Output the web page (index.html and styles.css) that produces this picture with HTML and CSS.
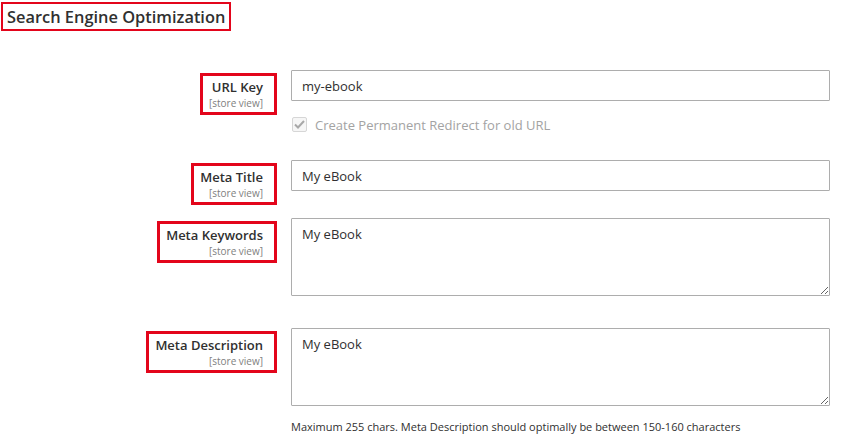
FILE: index.html
```html
<html>
    <head>
        <title>Search Engine Optimization</title>
        <meta charset="utf-8">
        <link rel="stylesheet" href="styles.css">
    </head>
    <body>
        <div class="section">
            <h2 class="section-title mark">Search Engine Optimization</h2>

            <div class="field-row row-url">
                <div class="label-col">
                    <label class="field-label mark" for="url-key">
                        <span class="label-text">URL Key</span>
                        <span class="scope">[store view]</span>
                    </label>
                </div>
                <div class="control">
                    <input id="url-key" class="text-input" type="text" value="my-ebook">
                    <div class="check-line">
                        <span class="check-box">
                            <svg width="11" height="9" viewBox="0 0 11 9"><path d="M1 4.5 L4 7.5 L10 1" fill="none" stroke="#a8a8a8" stroke-width="2"/></svg>
                        </span>
                        <span class="check-text">Create Permanent Redirect for old URL</span>
                    </div>
                </div>
            </div>

            <div class="field-row row-title">
                <div class="label-col">
                    <label class="field-label mark" for="meta-title">
                        <span class="label-text">Meta Title</span>
                        <span class="scope">[store view]</span>
                    </label>
                </div>
                <div class="control">
                    <input id="meta-title" class="text-input" type="text" value="My eBook">
                </div>
            </div>

            <div class="field-row row-keywords">
                <div class="label-col">
                    <label class="field-label mark" for="meta-keywords">
                        <span class="label-text">Meta Keywords</span>
                        <span class="scope">[store view]</span>
                    </label>
                </div>
                <div class="control">
                    <textarea id="meta-keywords" class="text-area">My eBook</textarea>
                </div>
            </div>

            <div class="field-row row-description">
                <div class="label-col">
                    <label class="field-label mark" for="meta-description">
                        <span class="label-text">Meta Description</span>
                        <span class="scope">[store view]</span>
                    </label>
                </div>
                <div class="control">
                    <textarea id="meta-description" class="text-area">My eBook</textarea>
                    <div class="note">Maximum 255 chars. Meta Description should optimally be between 150-160 characters</div>
                </div>
            </div>
        </div>
    </body>
</html>
```

FILE: styles.css
```css
html,
body {
    margin: 0;
    padding: 0;
    background-color: #ffffff;
    font-family: "Open Sans", "Liberation Sans", sans-serif;
    color: #303030;
}
.section {
    padding: 2px 0 0 1px;
}
.mark {
    border: 3px solid #e3051b;
}
.section-title {
    display: inline-block;
    margin: 0 0 39px 0;
    padding: 0 4px 0 4px;
    font-size: 16.4px;
    font-weight: 600;
    line-height: 25px;
    border-width: 2px;
}
.field-row {
    display: flex;
    align-items: flex-start;
}
.row-url {
    margin-bottom: 27px;
}
.row-title {
    margin-bottom: 13px;
}
.row-keywords {
    margin-bottom: 32px;
}
.label-col {
    width: 277px;
    flex: none;
    display: flex;
    justify-content: flex-end;
    margin-left: -1px;
}
.field-label {
    display: flex;
    flex-direction: column;
    align-items: flex-end;
    margin-top: 3px;
    padding: 2px 11px 2px 6px;
}
.label-text {
    font-size: 13px;
    font-weight: 600;
    line-height: 19px;
}
.scope {
    font-size: 10px;
    line-height: 13px;
    color: #808080;
}
.control {
    margin-left: 14px;
    width: 539px;
}
.text-input,
.text-area {
    box-sizing: border-box;
    display: block;
    width: 539px;
    margin: 0;
    border: 1px solid #adadad;
    border-radius: 1px;
    font-family: "Open Sans", "Liberation Sans", sans-serif;
    font-size: 13px;
    color: #303030;
    background-color: #ffffff;
    outline: none;
}
.text-input {
    height: 31px;
    padding: 0 10px;
}
.text-area {
    height: 78px;
    padding: 6px 10px;
    line-height: 18px;
    resize: vertical;
}
.check-line {
    display: flex;
    align-items: center;
    margin-top: 15px;
    height: 17px;
}
.check-box {
    box-sizing: border-box;
    width: 15px;
    height: 15px;
    margin-left: 1px;
    border: 1px solid #d6d6d6;
    border-radius: 2px;
    background-color: #f6f6f6;
    display: flex;
    align-items: center;
    justify-content: center;
}
.check-text {
    margin-left: 8px;
    font-size: 13px;
    color: #a3a3a3;
}
.note {
    margin-top: 13px;
    font-size: 11px;
    line-height: 16px;
}
```
